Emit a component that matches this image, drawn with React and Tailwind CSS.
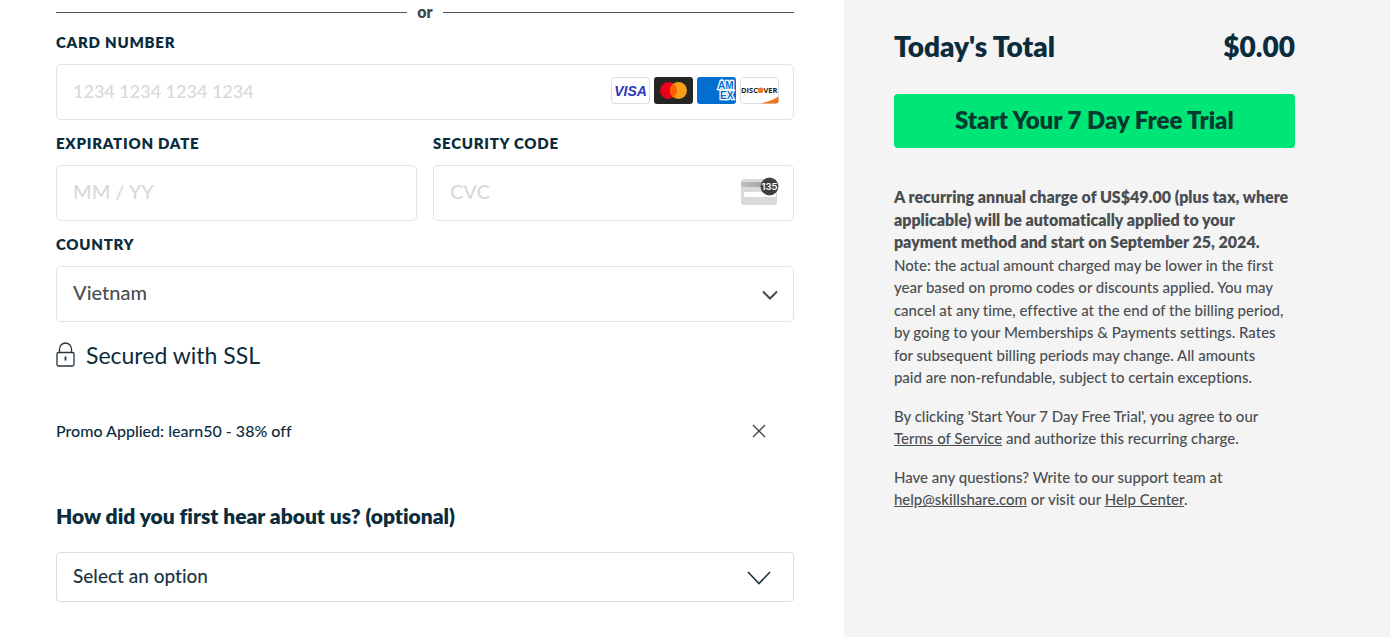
import React from "react";

const labelClass = "block mb-3 text-[15px] leading-5 font-extrabold tracking-wider text-[#0b2c3d] uppercase";
const fieldClass =
  "block w-full h-14 rounded-[5px] border border-[#e4e4e4] bg-white px-4 pb-1 text-xl font-medium text-[#4a4f52] placeholder:text-[#d9d9d9] outline-none focus:border-[#00a36c]";

function CardBrands() {
  return (
    <div className="pointer-events-none absolute top-[13px] right-[15px] flex items-center gap-1" aria-hidden="true">
      <svg width="39" height="27" viewBox="0 0 39 27">
        <rect x="0.5" y="0.5" width="38" height="26" rx="3" fill="#fff" stroke="#dedede" />
        <text x="19.5" y="19" textAnchor="middle" fontFamily="Liberation Sans, sans-serif" fontWeight="700" fontStyle="italic" fontSize="14" fill="#2a35c0">VISA</text>
      </svg>
      <svg width="39" height="27" viewBox="0 0 39 27">
        <rect width="39" height="27" rx="3" fill="#252525" />
        <circle cx="14.5" cy="13.5" r="8.5" fill="#eb001b" />
        <circle cx="24.5" cy="13.5" r="8.5" fill="#f79e1b" />
        <path d="M19.5 6.6a8.5 8.5 0 0 1 0 13.8a8.5 8.5 0 0 1 0-13.8z" fill="#ff5f00" />
      </svg>
      <svg width="39" height="27" viewBox="0 0 39 27">
        <rect width="39" height="27" rx="3" fill="#016fd0" />
        <g fontFamily="Liberation Sans, sans-serif" fontWeight="700" fontSize="10" fill="#016fd0" stroke="#fff" strokeWidth="2.6" paintOrder="stroke">
          <text x="21" y="12">AM</text>
          <text x="23" y="22">EX</text>
        </g>
      </svg>
      <svg width="39" height="27" viewBox="0 0 39 27">
        <rect x="0.5" y="0.5" width="38" height="26" rx="3" fill="#fff" stroke="#dedede" />
        <path d="M20 26.5C28 25 34 22.5 38.5 19.5V24a2.5 2.5 0 0 1-2.5 2.5z" fill="#ee7623" />
        <g fontFamily="Open Sans, sans-serif" fontWeight="700" fontSize="7.5" fill="#222">
          <text x="1" y="16">DISC</text>
          <text x="23.5" y="16">VER</text>
        </g>
        <circle cx="20.5" cy="13.3" r="2.8" fill="#ee7623" />
      </svg>
    </div>
  );
}

function CvcIcon() {
  return (
    <svg className="pointer-events-none absolute top-3 right-[15px]" width="39" height="30" viewBox="0 0 39 30" aria-hidden="true">
      <defs>
        <linearGradient id="stripe" x1="0" x2="1">
          <stop offset="0" stopColor="#bfc2c1" />
          <stop offset="1" stopColor="#8d9290" />
        </linearGradient>
      </defs>
      <rect x="1" y="2" width="36" height="26" rx="3" fill="#d9d9d9" />
      <rect x="1" y="5" width="36" height="5" fill="url(#stripe)" />
      <rect x="4" y="15" width="32" height="5" rx="1" fill="#fff" />
      <circle cx="29.5" cy="9.5" r="9" fill="#3b4044" />
      <text x="29.5" y="13" textAnchor="middle" fontFamily="Inter, sans-serif" fontWeight="600" fontSize="9.5" fill="#fff">135</text>
    </svg>
  );
}

function Field({ id, label, placeholder, inputClass = "", children }) {
  return (
    <div>
      <label htmlFor={id} className={labelClass}>{label}</label>
      <div className="relative">
        <input id={id} type="text" inputMode="numeric" placeholder={placeholder} className={fieldClass + " " + inputClass} />
        {children}
      </div>
    </div>
  );
}

function PaymentForm() {
  return (
    <main className="pl-14 pr-[50px] pb-9">
      <div className="flex items-center gap-2.5 h-6 text-base font-extrabold text-[#3f474b]">
        <span className="h-px flex-1 bg-[#4b5154]" />
        or
        <span className="h-px flex-1 bg-[#4b5154]" />
      </div>

      <form className="mt-2 grid gap-[13px]">
        <Field id="card" label="Card number" placeholder="1234 1234 1234 1234" inputClass="placeholder:text-lg">
          <CardBrands />
        </Field>
        <div className="grid grid-cols-2 gap-4">
          <Field id="expiry" label="Expiration date" placeholder="MM / YY" />
          <Field id="cvc" label="Security code" placeholder="CVC">
            <CvcIcon />
          </Field>
        </div>
        <div>
          <label htmlFor="country" className={labelClass}>Country</label>
          <div className="relative">
            <select id="country" className={fieldClass + " appearance-none"} defaultValue="Vietnam">
              <option>Vietnam</option>
            </select>
            <svg className="pointer-events-none absolute top-6 right-4" width="16" height="11" viewBox="0 0 16 11" fill="none" stroke="#44494c" strokeWidth="2" aria-hidden="true">
              <path d="M1 1.5L8 8.5L15 1.5" />
            </svg>
          </div>
        </div>
      </form>

      <div className="mt-[17px] flex items-center gap-2.5 text-[23px] leading-8 text-[#0b2c3d]">
        <svg width="20" height="26" viewBox="0 0 20 26" fill="none" stroke="#24363f" strokeWidth="1.3" aria-hidden="true">
          <rect x="1" y="10.5" width="17" height="13.5" rx="1.5" />
          <path d="M3.5 10.5V7a6 6 0 0 1 12 0v3.5" />
          <path d="M9.5 14.5v4" strokeWidth="1.8" />
        </svg>
        Secured with SSL
      </div>

      <div className="mt-12 flex items-center justify-between pr-[27px] text-base leading-6 font-medium text-[#0b2c3d]">
        <span>Promo Applied: learn50 - 38% off</span>
        <button type="button" aria-label="Remove promo code">
          <svg width="16" height="16" viewBox="0 0 16 16" fill="none" stroke="#3c464c" strokeWidth="1.3" aria-hidden="true">
            <path d="M2 2L14 14M14 2L2 14" />
          </svg>
        </button>
      </div>

      <label htmlFor="source" className="mt-[59px] block text-[21px] leading-7 font-extrabold text-[#0b2c3d]">
        How did you first hear about us? (optional)
      </label>
      <div className="relative mt-[22px]">
        <select id="source" className="block h-[50px] w-full appearance-none rounded-[4px] border border-[#dcdcdc] bg-white px-4 pb-0.5 text-[19px] font-medium text-[#1d3542] outline-none" defaultValue="">
          <option value="">Select an option</option>
        </select>
        <svg className="pointer-events-none absolute top-[18px] right-[22px]" width="26" height="16" viewBox="0 0 26 16" fill="none" stroke="#1f343e" strokeWidth="1.6" aria-hidden="true">
          <path d="M2 2L13 13.5L24 2" />
        </svg>
      </div>
    </main>
  );
}

function Summary() {
  return (
    <aside className="bg-[#f4f4f4] pl-[50px] pr-8 pt-[30px]">
      <div className="max-w-[401px]">
        <div className="flex items-center justify-between text-[28px] leading-8 font-extrabold text-[#0b2c3d]">
          <h2>Today's Total</h2>
          <span>$0.00</span>
        </div>
        <button type="button" className="mt-8 block h-[54px] w-full rounded-[4px] bg-[#00e676] pb-0.5 text-2xl font-extrabold text-[#06392f]">
          Start Your 7 Day Free Trial
        </button>
        <div className="mt-[38px] grid gap-4 text-[15px] leading-normal font-medium text-[#4a4e51]">
          <p>
            <strong className="text-base leading-5 font-extrabold">A recurring annual charge of US$49.00 (plus tax, where<br /> applicable) will be automatically applied to your<br /> payment method and start on September 25, 2024.</strong><br />
            Note: the actual amount charged may be lower in the first<br /> year based on promo codes or discounts applied. You may<br /> cancel at any time, effective at the end of the billing period,<br /> by going to your Memberships &amp; Payments settings. Rates<br /> for subsequent billing periods may change. All amounts<br /> paid are non-refundable, subject to certain exceptions.
          </p>
          <p>
            By clicking 'Start Your 7 Day Free Trial', you agree to our<br />
            <a href="#terms" className="underline">Terms of Service</a> and authorize this recurring charge.
          </p>
          <p>
            Have any questions? Write to our support team at<br />
            <a href="mailto:help@skillshare.com" className="underline">help@skillshare.com</a> or visit our <a href="#help" className="underline">Help Center</a>.
          </p>
        </div>
      </div>
    </aside>
  );
}

export default function App() {
  return (
    <div className="grid min-h-screen grid-cols-[17fr_11fr] bg-white font-['Lato',sans-serif] [font-variant-ligatures:none]">
      <PaymentForm />
      <Summary />
    </div>
  );
}
